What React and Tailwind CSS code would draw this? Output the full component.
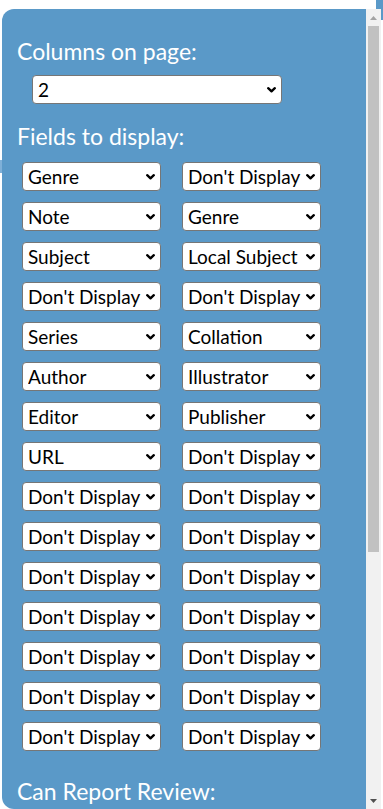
import React from "react";

const left = ["Genre","Note","Subject","Don't Display","Series","Author","Editor","URL","Don't Display","Don't Display","Don't Display","Don't Display","Don't Display","Don't Display","Don't Display"];
const right = ["Don't Display","Genre","Local Subject","Don't Display","Collation","Illustrator","Publisher","Don't Display","Don't Display","Don't Display","Don't Display","Don't Display","Don't Display","Don't Display","Don't Display"];

const allOpts = ["Don't Display","Genre","Note","Subject","Local Subject","Series","Collation","Author","Illustrator","Editor","Publisher","URL"];

function Chevron() {
  return (
    <svg className="pointer-events-none absolute right-[6px] top-1/2 -translate-y-1/2" width="9" height="6" viewBox="0 0 9 6">
      <path d="M1.2 1.2 L4.5 4.4 L7.8 1.2" fill="none" stroke="#000" strokeWidth="2.3" strokeLinecap="round" strokeLinejoin="round" />
    </svg>
  );
}

function Sel({ value, options, w }) {
  return (
    <div className={`relative ${w} h-[29px]`}>
      <select
        defaultValue={value}
        className="appearance-none w-full h-full bg-white border border-[#767676] rounded-[4px] pl-[5px] pr-[14px] text-black text-[19px] leading-[27px] outline-none"
        style={{ fontFamily: "Lato, sans-serif" }}
      >
        {options.map((o) => (
          <option key={o} value={o}>{o}</option>
        ))}
      </select>
      <Chevron />
    </div>
  );
}

export default function App() {
  return (
    <div className="relative h-[809px] w-[383px] overflow-hidden bg-white pt-[9px] pl-[2px]" style={{ fontFamily: "Lato, sans-serif" }}>
      <div className="absolute right-0 top-0 h-[9px] w-[7px] bg-[#5a99c8]" />
      <div className="absolute right-0 top-[9px] h-[11px] w-[2px] bg-[#5a99c8]" />
      <div className="absolute left-0 top-[160px] h-[13px] w-[2px] bg-[#7fb0d8]" />
      <div className="flex h-[800px] w-[379px] overflow-hidden rounded-l-[12px]">
        <div className="flex-1 bg-[#5a99c8] pl-[15px] pt-[27px] text-white">
          <h2 className="text-[23px] leading-[30px] font-normal">Columns on page:</h2>
          <div className="mt-[9px] ml-[15px]">
            <Sel value="2" options={["1","2","3"]} w="w-[250px]" />
          </div>
          <h2 className="mt-[17px] text-[23px] leading-[30px] font-normal">Fields to display:</h2>
          <div className="mt-[11px] ml-[5px] grid grid-cols-[139px_139px] gap-x-[21px] gap-y-[11px]">
            {left.map((l, i) => (
              <React.Fragment key={i}>
                <Sel value={l} options={allOpts} w="w-[139px]" />
                <Sel value={right[i]} options={allOpts} w="w-[139px]" />
              </React.Fragment>
            ))}
          </div>
          <h2 className="mt-[25px] text-[23px] leading-[30px] font-normal">Can Report Review:</h2>
        </div>
        <div className="flex w-[15px] flex-col bg-[#f1f1f1]">
          <div className="flex h-[17px] items-center justify-center">
            <svg width="7" height="4" viewBox="0 0 7 4"><path d="M0 4 L3.5 0 L7 4 Z" fill="#a3a3a3" /></svg>
          </div>
          <div className="mx-[2px] h-[526px] bg-[#c1c1c1]" />
          <div className="flex-1" />
          <div className="flex h-[17px] items-center justify-center">
            <svg width="7" height="4" viewBox="0 0 7 4"><path d="M0 0 L7 0 L3.5 4 Z" fill="#505050" /></svg>
          </div>
        </div>
      </div>
    </div>
  );
}
